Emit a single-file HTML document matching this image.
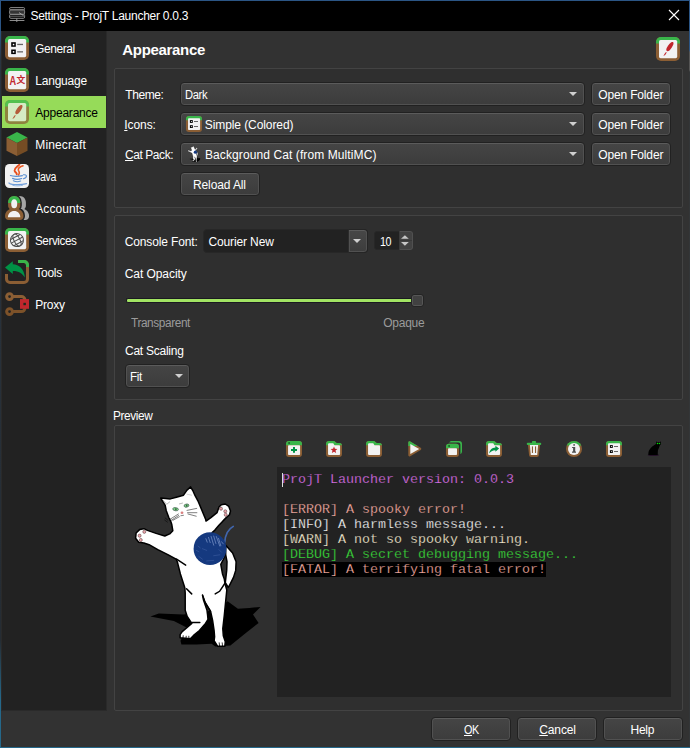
<!DOCTYPE html>
<html><head><meta charset="utf-8"><title>Settings - ProjT Launcher 0.0.3</title>
<style>
*{margin:0;padding:0;box-sizing:border-box}
html,body{width:690px;height:748px;overflow:hidden;background:#323232}
body{position:relative;font-family:"Liberation Sans",sans-serif;font-size:12px;color:#fff}
.abs{position:absolute}
.tx{position:absolute;white-space:nowrap;z-index:5}
.fr{position:absolute;z-index:50}
#title{position:absolute;left:1px;top:1px;width:688px;height:30px;background:#000}
#side{position:absolute;left:1px;top:31px;width:106px;height:680px;background:#222;border:1px solid #2a2a2a;border-top:none}
#sel{position:absolute;left:2px;top:96px;width:104px;height:32px;background:#96db59}
.gb{position:absolute;background:#2f2f2f;border:1px solid #434343;border-radius:2px}
.combo,.btn{position:absolute;height:24px;border:1px solid #212121;border-radius:4px;background:linear-gradient(#454545,#3c3c3c);box-shadow:inset 0 1px 0 0 #5b5b5b,inset 0 0 0 1px #515151}
.arr{position:absolute;width:0;height:0;border-left:4px solid transparent;border-right:4px solid transparent;border-top:4px solid #cfcfcf}
u{text-decoration:underline;text-underline-offset:1px}
.con{-webkit-text-stroke:0.25px #222;position:absolute;left:282px;font-family:"Liberation Mono",monospace;font-size:13.333px;line-height:15px;height:15px;white-space:pre;z-index:5}
</style></head><body>
<div id="title"></div>
<svg class="abs" style="left:0px;top:0px;" width="32" height="30" viewBox="0 0 32 30"><g fill="none" stroke="#9c9c9c" stroke-width="0.9"><rect x="9.6" y="7.6" width="15" height="2.3" rx="1.1"/><rect x="9.6" y="9.9" width="15" height="4.3" rx="1.2"/><rect x="9.6" y="14.2" width="15" height="4.1" rx="1.2"/><path d="M9.6 12H24.6M9.6 16.2H24.6" stroke="#777"/><path d="M19 12.6L23.5 15.6" stroke="#aaa"/><path d="M16.8 18.4V22M9.6 20.5H24.4"/></g></svg>

<div class="tx" style="left:30.40px;top:8px;letter-spacing:-0.261px;color:#fff;font-size:12px;line-height:16px;">Settings - ProjT Launcher 0.0.3</div>
<svg class="abs" style="left:668px;top:9px" width="12" height="12" viewBox="0 0 12 12"><path d="M1 1L11 11M11 1L1 11" stroke="#fff" stroke-width="1.1" fill="none"/></svg>
<div id="side"></div>
<div id="sel"></div>
<svg class="abs" style="left:5px;top:36px;" width="24" height="24" viewBox="0 0 24 24"><defs><clipPath id="ct1"><rect x="0" y="0" width="24" height="6.6"/></clipPath></defs><rect x="0" y="0" width="24" height="24" rx="5" fill="#8b5e34"/><rect x="0" y="0" width="24" height="24" rx="5" fill="#39b54a" clip-path="url(#ct1)"/><rect x="3" y="3" width="18.2" height="18.2" rx="1.6" fill="#f2f2f2"/><rect x="6.2" y="6.2" width="4.6" height="4.6" fill="#000"/><rect x="7.8" y="7.8" width="1.5" height="1.5" fill="#fff"/><rect x="6.2" y="13.5" width="4.6" height="4.6" fill="#000"/><rect x="7.8" y="15.1" width="1.5" height="1.5" fill="#fff"/><rect x="12.2" y="7.8" width="5.8" height="1.3" fill="#666"/><rect x="12.2" y="15.2" width="5.8" height="1.3" fill="#666"/></svg>
<svg class="abs" style="left:5px;top:68px;" width="24" height="24" viewBox="0 0 24 24"><defs><clipPath id="ct2"><rect x="0" y="0" width="24" height="6.6"/></clipPath></defs><rect x="0" y="0" width="24" height="24" rx="5" fill="#8b5e34"/><rect x="0" y="0" width="24" height="24" rx="5" fill="#39b54a" clip-path="url(#ct2)"/><rect x="3" y="3" width="18.2" height="18.2" rx="1.6" fill="#f2f2f2"/><text x="4.4" y="16.6" font-family="Liberation Sans, sans-serif" font-weight="bold" font-size="13.2" fill="#c1272d" textLength="6.6" lengthAdjust="spacingAndGlyphs">A</text><text x="11.5" y="15.4" font-family="Noto Sans CJK SC, Noto Sans CJK JP, sans-serif" font-weight="bold" font-size="8.8" fill="#c1272d">文</text></svg>
<svg class="abs" style="left:5px;top:100px;opacity:.7;" width="24" height="24" viewBox="0 0 24 24"><defs><clipPath id="ct3"><rect x="0" y="0" width="24" height="6.6"/></clipPath></defs><rect x="0" y="0" width="24" height="24" rx="5" fill="#8b5e34"/><rect x="0" y="0" width="24" height="24" rx="5" fill="#39b54a" clip-path="url(#ct3)"/><rect x="3" y="3" width="18.2" height="18.2" rx="1.6" fill="#f2f2f2"/><ellipse cx="0" cy="0" rx="5.4" ry="2.1" transform="translate(13.9 9.6) rotate(-56)" fill="#c1272d"/><path d="M10.9 15.2 L9.4 15.4 Q8 17.6 7.4 18.9 Q9.6 18.2 10.9 15.2Z" fill="#c1272d"/></svg>
<svg class="abs" style="left:5px;top:132px;" width="24" height="24" viewBox="0 0 24 24"><path d="M12 0L22.5 5.5L12 11L1.5 5.5Z" fill="#39b54a"/><path d="M1.5 5.5L12 11V24L1.5 18.8Z" fill="#8b5e34"/><path d="M12 11L22.5 5.5V18.8L12 24Z" fill="#754c24"/></svg>
<svg class="abs" style="left:5px;top:164px;" width="24" height="24" viewBox="0 0 24 24"><rect x="0" y="0" width="24" height="24" rx="4.5" fill="#f2f2f2"/><g fill="none" stroke-linecap="round"><path d="M14.4 0.6C12 3 8.6 4.6 9.8 7.2C10.6 8.6 12 9 11.8 10.4" stroke="#e8501e" stroke-width="1.9"/><path d="M18 1.8C15.6 2.6 12.8 4.2 13.4 6.2C14 7.8 15.4 8.6 13.6 11" stroke="#ea5a24" stroke-width="1.6"/><path d="M5.4 11.6C8 12.6 14 12.6 17.4 11.6" stroke="#5b8fd1" stroke-width="1.1"/><path d="M18.4 10.8C22.4 10 22.6 13.6 18.4 14.8" stroke="#5b8fd1" stroke-width="1.1"/><path d="M7.6 14.4C10 15.4 14 15.4 16.6 14.5" stroke="#5b8fd1" stroke-width="1.2"/><path d="M8.4 16.8C10.4 17.8 13.8 17.8 15.6 17" stroke="#5b8fd1" stroke-width="1.2"/><path d="M4 18.8C3 20.4 14 21.6 21.6 19.6" stroke="#6f9dd8" stroke-width="1.1"/><path d="M7.8 21.4C11 22.2 15 22 17.6 21.2" stroke="#8db3e2" stroke-width="1"/></g></svg>
<svg class="abs" style="left:5px;top:196px;" width="24" height="24" viewBox="0 0 24 24"><defs><clipPath id="ca"><rect x="0" y="0" width="24" height="7.1"/></clipPath></defs><path d="M9.2 0C5.8 0 3.1 2.8 3.1 6.4V9.4C3.1 11 3.8 12.2 4.8 13C2 14.2 0 16.8 0 20C0 22.4 1.6 24 3.6 24H14.9C16.9 24 18.5 22.4 18.5 20C18.5 16.8 16.5 14.2 13.7 13C14.7 12.2 15.3 11 15.3 9.4V6.4C15.3 2.8 12.6 0 9.2 0Z" transform="translate(5.6 0)" fill="#a6a6a6"/><path d="M9.2 0C5.8 0 3.1 2.8 3.1 6.4V9.4C3.1 11 3.8 12.2 4.8 13C2 14.2 0 16.8 0 20C0 22.4 1.6 24 3.6 24H14.9C16.9 24 18.5 22.4 18.5 20C18.5 16.8 16.5 14.2 13.7 13C14.7 12.2 15.3 11 15.3 9.4V6.4C15.3 2.8 12.6 0 9.2 0Z" fill="#8b5e34" stroke="#222" stroke-width="3"/><path d="M9.2 0C5.8 0 3.1 2.8 3.1 6.4V9.4C3.1 11 3.8 12.2 4.8 13C2 14.2 0 16.8 0 20C0 22.4 1.6 24 3.6 24H14.9C16.9 24 18.5 22.4 18.5 20C18.5 16.8 16.5 14.2 13.7 13C14.7 12.2 15.3 11 15.3 9.4V6.4C15.3 2.8 12.6 0 9.2 0Z" fill="#8b5e34"/><path d="M9.2 0C5.8 0 3.1 2.8 3.1 6.4V9.4C3.1 11 3.8 12.2 4.8 13C2 14.2 0 16.8 0 20C0 22.4 1.6 24 3.6 24H14.9C16.9 24 18.5 22.4 18.5 20C18.5 16.8 16.5 14.2 13.7 13C14.7 12.2 15.3 11 15.3 9.4V6.4C15.3 2.8 12.6 0 9.2 0Z" fill="#39b54a" clip-path="url(#ca)"/><ellipse cx="9.2" cy="7.7" rx="3" ry="4.5" fill="#f2f2f2"/><path d="M2.9 21.2C2.9 17.6 5.6 15 9.2 15C12.8 15 15.3 17.6 15.3 21.2Z" fill="#f2f2f2"/></svg>
<svg class="abs" style="left:5px;top:228px;" width="24" height="24" viewBox="0 0 24 24"><defs><clipPath id="ct4"><rect x="0" y="0" width="24" height="6.6"/></clipPath></defs><rect x="0" y="0" width="24" height="24" rx="5" fill="#8b5e34"/><rect x="0" y="0" width="24" height="24" rx="5" fill="#39b54a" clip-path="url(#ct4)"/><rect x="3" y="3" width="18.2" height="18.2" rx="1.6" fill="#f2f2f2"/><g fill="none" stroke="#4d4d4d" stroke-width="1" transform="rotate(-28 12 12.1)"><circle cx="12" cy="12.1" r="6.5"/><ellipse cx="12" cy="12.1" rx="2.9" ry="6.5"/><path d="M5.5 12.1H18.5M6.6 8.6H17.4M6.6 15.6H17.4"/></g></svg>
<svg class="abs" style="left:5px;top:260px;" width="24" height="24" viewBox="0 0 24 24"><defs><clipPath id="cq"><rect x="0" y="0" width="24" height="7.1"/></clipPath></defs><path d="M13.1 1.5H19A3.5 3.5 0 0 1 22.5 5V19A3.5 3.5 0 0 1 19 22.5H5A3.5 3.5 0 0 1 1.5 19V14" fill="none" stroke="#8b5e34" stroke-width="3"/><path d="M13.1 1.5H19A3.5 3.5 0 0 1 22.5 5V19" fill="none" stroke="#39b54a" stroke-width="3" clip-path="url(#cq)"/><path d="M0 7.6L7.8 1.2V4.3C14 4.3 19.4 9.4 19.9 17.6C17.6 13.4 13.6 10.8 7.8 10.9V13.9Z" fill="#009245"/></svg>
<svg class="abs" style="left:5px;top:292px;" width="24" height="24" viewBox="0 0 24 24"><g fill="none" stroke-width="3"><path d="M7.4 4.55H16.4A3.5 3.5 0 0 1 19.9 8.05V12" stroke="#8b5e34"/><path d="M7.4 19.6H16.4A3.5 3.5 0 0 0 19.9 16.1V12" stroke="#7d5229"/><circle cx="4.55" cy="4.55" r="2.9" stroke="#8b5e34"/><circle cx="4.55" cy="19.6" r="2.9" stroke="#7d5229"/></g><rect x="15" y="7.1" width="9.2" height="9.7" fill="#c1272d"/><rect x="18.4" y="10.8" width="2.5" height="2.4" fill="#1e2a1e"/></svg>
<svg class="abs" style="left:656px;top:37px;" width="24" height="24" viewBox="0 0 24 24"><defs><clipPath id="ct5"><rect x="0" y="0" width="24" height="6.6"/></clipPath></defs><rect x="0" y="0" width="24" height="24" rx="5" fill="#8b5e34"/><rect x="0" y="0" width="24" height="24" rx="5" fill="#39b54a" clip-path="url(#ct5)"/><rect x="3" y="3" width="18.2" height="18.2" rx="1.6" fill="#f2f2f2"/><ellipse cx="0" cy="0" rx="5.4" ry="2.1" transform="translate(13.9 9.6) rotate(-56)" fill="#c1272d"/><path d="M10.9 15.2 L9.4 15.4 Q8 17.6 7.4 18.9 Q9.6 18.2 10.9 15.2Z" fill="#c1272d"/></svg>

<div class="tx" style="left:35.30px;top:41px;letter-spacing:-0.400px;color:#fff;font-size:12px;line-height:16px;transform:scaleX(0.9994);transform-origin:0 0;">General</div>
<div class="tx" style="left:35.30px;top:73px;letter-spacing:-0.217px;color:#fff;font-size:12px;line-height:16px;">Language</div>
<div class="tx" style="left:35.30px;top:105px;letter-spacing:-0.227px;color:#000;font-size:12px;line-height:16px;">Appearance</div>
<div class="tx" style="left:35.30px;top:137px;letter-spacing:0.136px;color:#fff;font-size:12px;line-height:16px;">Minecraft</div>
<div class="tx" style="left:35.30px;top:169px;letter-spacing:-0.400px;color:#fff;font-size:12px;line-height:16px;transform:scaleX(0.8826);transform-origin:0 0;">Java</div>
<div class="tx" style="left:35.30px;top:201px;letter-spacing:0.063px;color:#fff;font-size:12px;line-height:16px;">Accounts</div>
<div class="tx" style="left:35.30px;top:233px;letter-spacing:-0.400px;color:#fff;font-size:12px;line-height:16px;transform:scaleX(0.9696);transform-origin:0 0;">Services</div>
<div class="tx" style="left:35.30px;top:265px;letter-spacing:-0.278px;color:#fff;font-size:12px;line-height:16px;">Tools</div>
<div class="tx" style="left:35.30px;top:297px;letter-spacing:-0.268px;color:#fff;font-size:12px;line-height:16px;">Proxy</div>

<div class="gb" style="left:114px;top:68px;width:569px;height:140px"></div>
<div class="combo" style="left:180px;top:82px;width:405px"></div>
<div class="combo" style="left:180px;top:112px;width:405px"></div>
<div class="combo" style="left:180px;top:142px;width:405px"></div>
<div class="arr" style="left:569px;top:92px"></div>
<div class="arr" style="left:569px;top:122px"></div>
<div class="arr" style="left:569px;top:152px"></div>
<div class="btn" style="left:591px;top:82px;width:80px"></div>
<div class="btn" style="left:591px;top:112px;width:80px"></div>
<div class="btn" style="left:591px;top:142px;width:80px"></div>
<div class="btn" style="left:180px;top:172px;width:80px"></div>

<div class="tx" style="left:122.30px;top:40px;letter-spacing:-0.314px;color:#fff;font-size:15px;line-height:20px;font-weight:bold;">Appearance</div>
<div class="tx" style="left:125.20px;top:87px;letter-spacing:-0.390px;color:#fff;font-size:12px;line-height:16px;">Theme:</div>
<div class="tx" style="left:124.20px;top:117px;letter-spacing:-0.056px;color:#fff;font-size:12px;line-height:16px;"><u>I</u>cons:</div>
<div class="tx" style="left:124.80px;top:147px;letter-spacing:-0.400px;color:#fff;font-size:12px;line-height:16px;transform:scaleX(0.9941);transform-origin:0 0;"><u>C</u>at Pack:</div>
<div class="tx" style="left:185.20px;top:87px;letter-spacing:-0.400px;color:#fff;font-size:12px;line-height:16px;transform:scaleX(0.9309);transform-origin:0 0;">Dark</div>
<div class="tx" style="left:204.80px;top:117px;letter-spacing:-0.089px;color:#fff;font-size:12px;line-height:16px;">Simple (Colored)</div>
<div class="tx" style="left:205.00px;top:147px;letter-spacing:0.096px;color:#fff;font-size:12px;line-height:16px;">Background Cat (from MultiMC)</div>
<div class="tx" style="left:598.30px;top:87px;letter-spacing:-0.161px;color:#fff;font-size:12px;line-height:16px;">Open Folder</div>
<div class="tx" style="left:598.30px;top:117px;letter-spacing:-0.161px;color:#fff;font-size:12px;line-height:16px;">Open Folder</div>
<div class="tx" style="left:598.30px;top:147px;letter-spacing:-0.161px;color:#fff;font-size:12px;line-height:16px;">Open Folder</div>
<div class="tx" style="left:193.00px;top:177px;letter-spacing:-0.115px;color:#fff;font-size:12px;line-height:16px;">Reload All</div>

<div class="gb" style="left:114px;top:215px;width:569px;height:185px"></div>
<!-- font combo -->
<div class="abs" style="left:203px;top:229px;width:165px;height:24px;border-radius:4px;background:#222;border:1px solid #272727"></div>
<div class="abs" style="left:348px;top:229px;width:20px;height:24px;border-radius:0 4px 4px 0;background:linear-gradient(#474747,#3d3d3d);border:1px solid #252525;border-left-color:#2c2c2c;box-shadow:inset 0 1px 0 0 #5b5b5b,inset 0 0 0 1px #515151"></div>
<div class="arr" style="left:353px;top:239px"></div>
<!-- spinbox -->
<div class="abs" style="left:374px;top:231px;width:39px;height:19px;border-radius:3px;background:#222;border:1px solid #272727"></div>
<div class="abs" style="left:399px;top:231px;width:14px;height:19px;border-radius:0 3px 3px 0;background:#424242;border:1px solid #505050;border-left-color:#3a3a3a"></div>
<div class="abs" style="left:400px;top:240px;width:12px;height:1px;background:#383838"></div>
<svg class="abs" style="left:399px;top:231px" width="14" height="19" viewBox="0 0 14 19"><path d="M2 7.8L5.9 4.2L9.8 7.8Z M2 11L5.9 14.8L9.8 11Z" fill="#c6c6c6"/></svg>
<!-- slider -->
<div class="abs" style="left:126px;top:298px;width:291px;height:5px;background:#a2e463;border:1px solid #1a1a20;border-width:1px 0 1px 1px;border-radius:2px 0 0 2px"></div>
<div class="abs" style="left:411px;top:294px;width:13px;height:13px;border-radius:3px;background:#414141;border:1px solid #242424;box-shadow:inset 0 0 0 1px #565656"></div>
<!-- fit combo -->
<div class="combo" style="left:125px;top:364px;width:65px"></div>
<div class="arr" style="left:175px;top:374px"></div>

<div class="tx" style="left:124.70px;top:234px;letter-spacing:-0.123px;color:#fff;font-size:12px;line-height:16px;">Console Font:</div>
<div class="tx" style="left:208.40px;top:234px;letter-spacing:-0.122px;color:#fff;font-size:12px;line-height:16px;">Courier New</div>
<div class="tx" style="left:379.70px;top:234px;letter-spacing:-0.400px;color:#fff;font-size:12px;line-height:16px;transform:scaleX(0.8965);transform-origin:0 0;">10</div>
<div class="tx" style="left:124.70px;top:266px;letter-spacing:-0.059px;color:#fff;font-size:12px;line-height:16px;">Cat Opacity</div>
<div class="tx" style="left:131.00px;top:315px;letter-spacing:-0.400px;color:#9b9b9b;font-size:12px;line-height:16px;transform:scaleX(0.9849);transform-origin:0 0;">Transparent</div>
<div class="tx" style="left:383.20px;top:315px;letter-spacing:-0.246px;color:#9b9b9b;font-size:12px;line-height:16px;">Opaque</div>
<div class="tx" style="left:125.00px;top:343px;letter-spacing:-0.249px;color:#fff;font-size:12px;line-height:16px;">Cat Scaling</div>
<div class="tx" style="left:130.00px;top:369px;letter-spacing:-0.400px;color:#fff;font-size:12px;line-height:16px;transform:scaleX(0.9700);transform-origin:0 0;">Fit</div>

<div class="tx" style="left:113.30px;top:408px;letter-spacing:-0.400px;color:#fff;font-size:12px;line-height:16px;transform:scaleX(0.9874);transform-origin:0 0;">Preview</div>
<div class="gb" style="left:114px;top:425px;width:569px;height:286px"></div>
<svg class="abs" style="left:286px;top:441px;" width="16" height="16" viewBox="0 0 16 16"><defs><clipPath id="t1"><rect x="-1" y="-1" width="20" height="5.2"/></clipPath></defs><rect width="16" height="16" rx="3" fill="#8b5e34"/><rect width="16" height="16" rx="3" fill="#39b54a" clip-path="url(#t1)"/><rect x="2.05" y="4.2" width="12.05" height="9.9" rx="0.8" fill="#f2f2f2"/><rect x="2.3" y="1.2" width="1.6" height="1.6" fill="#1d4d24"/><path d="M7 6.1H9V7.9H11V9.9H9V11.8H7V9.9H5V7.9H7Z" fill="#009245"/></svg>
<svg class="abs" style="left:326px;top:441px;" width="16" height="16" viewBox="0 0 16 16"><defs><clipPath id="t2"><rect x="-1" y="-1" width="20" height="5.2"/></clipPath></defs><path d="M0 3A3 3 0 0 1 3 0H7.6C8.6 0 9 0.6 9.6 1.3C10 1.8 10.4 2 11 2H13.5A2.5 2.5 0 0 1 16 4.5V13A3 3 0 0 1 13 16H3A3 3 0 0 1 0 13Z" fill="#8b5e34"/><path d="M0 3A3 3 0 0 1 3 0H7.6C8.6 0 9 0.6 9.6 1.3C10 1.8 10.4 2 11 2H13.5A2.5 2.5 0 0 1 16 4.5V13A3 3 0 0 1 13 16H3A3 3 0 0 1 0 13Z" fill="#39b54a" clip-path="url(#t2)"/><path d="M2.05 3.2A1 1 0 0 1 3.05 2.2H6.6C7.4 2.2 7.6 2.8 8 3.4C8.4 4 8.8 4.2 9.6 4.2H13.1A1 1 0 0 1 14.1 5.2V13.1A1 1 0 0 1 13.1 14.1H3.05A1 1 0 0 1 2.05 13.1Z" fill="#f2f2f2"/><polygon points="8.00,5.50 8.94,7.81 11.42,7.99 9.52,9.59 10.12,12.01 8.00,10.70 5.88,12.01 6.48,9.59 4.58,7.99 7.06,7.81" fill="#c1272d"/></svg>
<svg class="abs" style="left:366px;top:441px;" width="16" height="16" viewBox="0 0 16 16"><defs><clipPath id="t3"><rect x="-1" y="-1" width="20" height="5.2"/></clipPath></defs><path d="M0 3A3 3 0 0 1 3 0H7.6C8.6 0 9 0.6 9.6 1.3C10 1.8 10.4 2 11 2H13.5A2.5 2.5 0 0 1 16 4.5V13A3 3 0 0 1 13 16H3A3 3 0 0 1 0 13Z" fill="#8b5e34"/><path d="M0 3A3 3 0 0 1 3 0H7.6C8.6 0 9 0.6 9.6 1.3C10 1.8 10.4 2 11 2H13.5A2.5 2.5 0 0 1 16 4.5V13A3 3 0 0 1 13 16H3A3 3 0 0 1 0 13Z" fill="#39b54a" clip-path="url(#t3)"/><path d="M2.05 3.2A1 1 0 0 1 3.05 2.2H6.6C7.4 2.2 7.6 2.8 8 3.4C8.4 4 8.8 4.2 9.6 4.2H13.1A1 1 0 0 1 14.1 5.2V13.1A1 1 0 0 1 13.1 14.1H3.05A1 1 0 0 1 2.05 13.1Z" fill="#f2f2f2"/></svg>
<svg class="abs" style="left:406px;top:441px;" width="16" height="16" viewBox="0 0 16 16"><defs><clipPath id="t4"><rect x="-1" y="-1" width="20" height="6.1"/></clipPath></defs><path d="M3.6 1.6L14 7.9L3.6 14.2Z" fill="#8b5e34" stroke="#8b5e34" stroke-width="2.6" stroke-linejoin="round"/><path d="M3.6 1.6L14 7.9L3.6 14.2Z" fill="#39b54a" stroke="#39b54a" stroke-width="2.6" stroke-linejoin="round" clip-path="url(#t4)"/><path d="M4.3 3L13.2 7.9L4.3 12.9Z" fill="#f2f2f2"/></svg>
<svg class="abs" style="left:446px;top:441px;" width="16" height="16" viewBox="0 0 16 16"><defs><clipPath id="t5"><rect x="-1" y="-1" width="20" height="8.3"/></clipPath></defs><path d="M3.2 1.6C3.6 0.6 4.6 0 5.8 0H13A3 3 0 0 1 16 3V10.4C16 11.6 15.4 12.5 14.4 13V3.6A2 2 0 0 0 12.4 1.6Z" fill="#39b54a"/><rect x="0" y="2.8" width="13" height="13.2" rx="3" fill="#8b5e34"/><rect x="0" y="2.8" width="13" height="13.2" rx="3" fill="#39b54a" clip-path="url(#t5)"/><rect x="2.05" y="7.3" width="8.95" height="6.7" rx="0.8" fill="#f2f2f2"/><rect x="2.3" y="4.2" width="1.6" height="1.6" fill="#1d4d24"/></svg>
<svg class="abs" style="left:486px;top:441px;" width="16" height="16" viewBox="0 0 16 16"><defs><clipPath id="t6"><rect x="-1" y="-1" width="20" height="5.2"/></clipPath></defs><path d="M0 3A3 3 0 0 1 3 0H7.6C8.6 0 9 0.6 9.6 1.3C10 1.8 10.4 2 11 2H13.5A2.5 2.5 0 0 1 16 4.5V13A3 3 0 0 1 13 16H3A3 3 0 0 1 0 13Z" fill="#8b5e34"/><path d="M0 3A3 3 0 0 1 3 0H7.6C8.6 0 9 0.6 9.6 1.3C10 1.8 10.4 2 11 2H13.5A2.5 2.5 0 0 1 16 4.5V13A3 3 0 0 1 13 16H3A3 3 0 0 1 0 13Z" fill="#39b54a" clip-path="url(#t6)"/><path d="M2.05 3.2A1 1 0 0 1 3.05 2.2H6.6C7.4 2.2 7.6 2.8 8 3.4C8.4 4 8.8 4.2 9.6 4.2H13.1A1 1 0 0 1 14.1 5.2V13.1A1 1 0 0 1 13.1 14.1H3.05A1 1 0 0 1 2.05 13.1Z" fill="#f2f2f2"/><path d="M13.1 7.5L9.4 4.7V6.4C6 6.5 3.4 9 3.2 12.6C4.6 10.4 6.4 9.3 9.4 9.2V10.8Z" fill="#009245"/></svg>
<svg class="abs" style="left:526px;top:441px;" width="16" height="16" viewBox="0 0 16 16"><path d="M1.9 3.6H14.1L12.9 14.2A2 2 0 0 1 11 16H5A2 2 0 0 1 3.1 14.2Z" fill="#8b5e34"/><path d="M3.9 3.9H12.1L11.2 14.1H4.8Z" fill="#f2f2f2"/><rect x="5.9" y="5.2" width="1.1" height="6.8" rx="0.5" fill="#8b5e34"/><rect x="9" y="5.2" width="1.1" height="6.8" rx="0.5" fill="#8b5e34"/><rect x="0.75" y="1.8" width="14.5" height="2.1" rx="1" fill="#39b54a"/><rect x="6" y="0" width="4" height="2.4" rx="0.6" fill="#39b54a"/></svg>
<svg class="abs" style="left:566px;top:441px;" width="16" height="16" viewBox="0 0 16 16"><defs><clipPath id="t8"><rect x="-1" y="-1" width="20" height="5.4"/></clipPath></defs><circle cx="8" cy="8" r="8" fill="#8b5e34"/><circle cx="8" cy="8" r="8" fill="#39b54a" clip-path="url(#t8)"/><circle cx="8" cy="8" r="6" fill="#f2f2f2"/><circle cx="8.1" cy="3.9" r="0.9" fill="#4d4d4d"/><path d="M6.1 5.9H9.2V10.5H10V11.8H6V10.5H7.1V7.1H6.1Z" fill="#4d4d4d"/></svg>
<svg class="abs" style="left:606px;top:441px;" width="16" height="16" viewBox="0 0 16 16"><defs><clipPath id="t9"><rect x="-1" y="-1" width="20" height="5.2"/></clipPath></defs><rect width="16" height="16" rx="3" fill="#8b5e34"/><rect width="16" height="16" rx="3" fill="#39b54a" clip-path="url(#t9)"/><rect x="2.05" y="2.2" width="12.05" height="11.9" rx="0.8" fill="#f2f2f2"/><rect x="3.9" y="4.1" width="2.9" height="2.8" fill="#000"/><rect x="4.95" y="5.1" width="0.9" height="0.9" fill="#fff"/><rect x="3.9" y="9.2" width="2.9" height="2.8" fill="#000"/><rect x="4.95" y="10.2" width="0.9" height="0.9" fill="#fff"/><rect x="8" y="5" width="4" height="1" fill="#666"/><rect x="8" y="10" width="4" height="1" fill="#666"/></svg>
<svg class="abs" style="left:646px;top:441px;" width="16" height="16" viewBox="0 0 16 16"><ellipse cx="7.4" cy="14.1" rx="5.6" ry="1" fill="#241028"/><path d="M10.3 0.2L11.3 1.2H13.7L14.7 0.2L15 2.6C15 3.6 14.4 4.2 13.8 4.5C13.4 6.4 12.2 8 11.9 9.6C11.7 11 11.9 12.6 11.7 14H2.4C2.2 12 2.6 10.4 3.3 9C4.6 6.6 7.6 4.4 10 3Z" fill="#000"/><circle cx="11.5" cy="2.5" r="0.75" fill="#00e400"/><circle cx="13.5" cy="2.5" r="0.75" fill="#00e400"/></svg>
<svg class="abs" style="left:186px;top:116px;" width="16" height="16" viewBox="0 0 16 16"><defs><clipPath id="c9"><rect x="-1" y="-1" width="20" height="5.2"/></clipPath></defs><rect width="16" height="16" rx="3" fill="#8b5e34"/><rect width="16" height="16" rx="3" fill="#39b54a" clip-path="url(#c9)"/><rect x="2.05" y="2.2" width="12.05" height="11.9" rx="0.8" fill="#f2f2f2"/><rect x="3.9" y="4.1" width="2.9" height="2.8" fill="#000"/><rect x="4.95" y="5.1" width="0.9" height="0.9" fill="#fff"/><rect x="3.9" y="9.2" width="2.9" height="2.8" fill="#000"/><rect x="4.95" y="10.2" width="0.9" height="0.9" fill="#fff"/><rect x="8" y="5" width="4" height="1" fill="#666"/><rect x="8" y="10" width="4" height="1" fill="#666"/></svg>
<svg class="abs" style="left:186px;top:146px" width="16" height="16" viewBox="0 0 16 16"><g transform="translate(1.9 0) scale(0.1) translate(-135 -487)"><path d="M150.4 616.4 L158.8 613.5 L183.3 614.5 L202.1 612.6 L219.1 608.8 L227.6 601.3 L237.9 608.8 L249.2 607.9 L260.5 606.9 L253.0 614.5 L258.6 623.0 L245.5 633.3 L230.4 645.6 L215.3 646.5 L211.6 643.7 L196.5 644.6 L181.4 644.6 L180.5 640.8 L187.1 627.7 L173.9 621.1Z" fill="#000"/><path d="M225.7 545.2 L232.6 553.0 L236.1 561.7 L235.7 570.4 L233.5 577.4 L230.0 584.3 L228.3 587.5 L225.3 582.6 L226.7 570.4 L227.0 561.7 L225.7 554.8Z" fill="#fff" stroke="#111" stroke-width="3"/><path d="M190.6 486.9 L193.1 491.2 L195.1 495.7 L197.9 500.8 L200.7 507.4 L203.0 513.0 L205.6 519.1 L206.0 521.1 L210.9 517.7 L217.0 512.7 L219.0 507.0 L221.3 504.7 L225.3 504.0 L228.8 506.4 L230.5 511.0 L229.5 514.8 L226.5 517.4 L223.0 520.9 L218.7 525.6 L214.9 530.1 L212.1 532.5 L218.7 537.4 L223.9 546.1 L224.8 556.5 L220.8 564.3 L222.5 573.9 L224.3 579.1 L225.0 583.5 L226.8 590.0 L225.8 600.1 L224.3 615.4 L222.8 628.6 L223.3 635.7 L225.3 641.7 L224.8 646.3 L217.7 646.3 L214.1 640.7 L214.6 636.7 L214.1 630.6 L212.6 620.4 L210.6 611.3 L205.0 602.2 L202.5 595.1 L203.5 600.1 L207.0 610.3 L207.5 614.3 L208.0 619.4 L205.5 623.5 L199.4 630.6 L193.3 635.7 L190.3 638.7 L180.1 637.7 L180.1 634.6 L182.2 631.6 L191.8 623.5 L187.2 616.4 L185.2 610.3 L185.2 593.0 L184.8 587.8 L180.4 573.9 L177.3 561.7 L176.1 559.1 L168.3 554.8 L157.8 549.6 L149.1 544.7 L143.9 543.0 L138.7 542.3 L135.6 538.3 L136.1 533.0 L139.6 529.6 L143.9 528.7 L147.4 530.4 L156.1 533.4 L164.8 536.0 L169.7 533.9 L172.8 530.7 L171.8 524.6 L170.8 521.6 L168.8 517.5 L166.2 510.4 L165.2 505.4 L160.7 498.1 L165.7 498.5 L170.3 498.9 L176.4 497.2 L183.5 495.2 L187.0 490.1Z" fill="#fff" stroke="#111" stroke-width="3" stroke-linejoin="round"/><circle cx="210.0" cy="548.7" r="16.4" fill="#15397f"/></g></svg>

<svg class="abs" style="left:0;top:0" width="690" height="748" viewBox="0 0 690 748"><path d="M150.4 616.4 L158.8 613.5 L183.3 614.5 L202.1 612.6 L219.1 608.8 L227.6 601.3 L237.9 608.8 L249.2 607.9 L260.5 606.9 L253.0 614.5 L258.6 623.0 L245.5 633.3 L230.4 645.6 L215.3 646.5 L211.6 643.7 L196.5 644.6 L181.4 644.6 L180.5 640.8 L187.1 627.7 L173.9 621.1Z" fill="#000"/><path d="M225.7 545.2 L232.6 553.0 L236.1 561.7 L235.7 570.4 L233.5 577.4 L230.0 584.3 L228.3 587.5 L225.3 582.6 L226.7 570.4 L227.0 561.7 L225.7 554.8Z" fill="#fff" stroke="#000" stroke-width="1.5" stroke-linejoin="round"/><path d="M190.6 486.9 L193.1 491.2 L195.1 495.7 L197.9 500.8 L200.7 507.4 L203.0 513.0 L205.6 519.1 L206.0 521.1 L210.9 517.7 L217.0 512.7 L219.0 507.0 L221.3 504.7 L225.3 504.0 L228.8 506.4 L230.5 511.0 L229.5 514.8 L226.5 517.4 L223.0 520.9 L218.7 525.6 L214.9 530.1 L212.1 532.5 L218.7 537.4 L223.9 546.1 L224.8 556.5 L220.8 564.3 L222.5 573.9 L224.3 579.1 L225.0 583.5 L226.8 590.0 L225.8 600.1 L224.3 615.4 L222.8 628.6 L223.3 635.7 L225.3 641.7 L224.8 646.3 L217.7 646.3 L214.1 640.7 L214.6 636.7 L214.1 630.6 L212.6 620.4 L210.6 611.3 L205.0 602.2 L202.5 595.1 L203.5 600.1 L207.0 610.3 L207.5 614.3 L208.0 619.4 L205.5 623.5 L199.4 630.6 L193.3 635.7 L190.3 638.7 L180.1 637.7 L180.1 634.6 L182.2 631.6 L191.8 623.5 L187.2 616.4 L185.2 610.3 L185.2 593.0 L184.8 587.8 L180.4 573.9 L177.3 561.7 L176.1 559.1 L168.3 554.8 L157.8 549.6 L149.1 544.7 L143.9 543.0 L138.7 542.3 L135.6 538.3 L136.1 533.0 L139.6 529.6 L143.9 528.7 L147.4 530.4 L156.1 533.4 L164.8 536.0 L169.7 533.9 L172.8 530.7 L171.8 524.6 L170.8 521.6 L168.8 517.5 L166.2 510.4 L165.2 505.4 L160.7 498.1 L165.7 498.5 L170.3 498.9 L176.4 497.2 L183.5 495.2 L187.0 490.1Z" fill="#fff" stroke="#000" stroke-width="1.5" stroke-linejoin="round"/><path d="M176.6 559.1 L185.7 565.2" fill="none" stroke="#000" stroke-width="1.4" stroke-linecap="round"/><path d="M186.5 588.7 L191.7 593.9" fill="none" stroke="#000" stroke-width="1.5" stroke-linecap="round"/><path d="M224.8 583.5 L219.6 591.3 L215.2 593.9" fill="none" stroke="#000" stroke-width="1.5" stroke-linecap="round"/><path d="M191.8 622.5 L199.9 622.5" fill="none" stroke="#000" stroke-width="1.3" stroke-linecap="round"/><path d="M202.5 595.1 L205.0 602.2 L210.6 611.3" fill="none" stroke="#000" stroke-width="1.2" stroke-linecap="round"/><path d="M187.0 510.4 L196.7 508.4" fill="none" stroke="#000" stroke-width="0.5" stroke-linecap="round"/><path d="M187.5 512.7 L196.9 512.7" fill="none" stroke="#000" stroke-width="0.5" stroke-linecap="round"/><path d="M188.0 514.0 L196.2 516.2" fill="none" stroke="#000" stroke-width="0.5" stroke-linecap="round"/><path d="M178.4 514.0 L170.3 519.1" fill="none" stroke="#000" stroke-width="0.5" stroke-linecap="round"/><path d="M178.6 515.5 L170.8 520.6" fill="none" stroke="#000" stroke-width="0.5" stroke-linecap="round"/><path d="M179.4 516.7 L172.8 520.4" fill="none" stroke="#000" stroke-width="0.5" stroke-linecap="round"/><path d="M165.2 518.0 L167.8 520.1" fill="none" stroke="#000" stroke-width="0.5" stroke-linecap="round"/><path d="M164.7 520.1 L167.4 522.1" fill="none" stroke="#000" stroke-width="0.5" stroke-linecap="round"/><path d="M179.4 503.9 L182.5 503.1" fill="none" stroke="#777" stroke-width="0.5" stroke-linecap="round"/><ellipse cx="175.6" cy="509.2" rx="2.9" ry="1.6" fill="#7fd58a" stroke="#233" stroke-width="0.5" transform="rotate(8 175.6 509.2)"/><ellipse cx="175.9" cy="509.2" rx="0.5" ry="1.2" fill="#1a3a22"/><ellipse cx="186.5" cy="505.6" rx="2.5" ry="1.6" fill="#7fd58a" stroke="#233" stroke-width="0.5" transform="rotate(-12 186.5 505.6)"/><ellipse cx="186.8" cy="505.6" rx="0.5" ry="1.2" fill="#1a3a22"/><ellipse cx="182.0" cy="512.7" rx="1.4" ry="1.2" fill="#d98080"/><path d="M180.9 515.7 L183.5 515.3" fill="none" stroke="#333" stroke-width="0.6" stroke-linecap="round"/><path d="M162.7 499.8 L166.7 504.3 L169.8 501.8" fill="none" stroke="#777" stroke-width="0.5" stroke-linecap="round"/><path d="M187.0 494.2 L191.6 495.2" fill="none" stroke="#999" stroke-width="0.4" stroke-linecap="round"/><ellipse cx="139.6" cy="535.7" rx="1.5" ry="1.6" fill="#eaa4aa" stroke="#4a3030" stroke-width="0.5"/><ellipse cx="140.8" cy="540.0" rx="1.5" ry="1.6" fill="#eaa4aa" stroke="#4a3030" stroke-width="0.5"/><ellipse cx="144.3" cy="531.8" rx="1.5" ry="1.6" fill="#eaa4aa" stroke="#4a3030" stroke-width="0.5"/><ellipse cx="221.0" cy="508.7" rx="1.5" ry="1.6" fill="#eaa4aa" stroke="#4a3030" stroke-width="0.5"/><ellipse cx="225.3" cy="511.3" rx="1.5" ry="1.6" fill="#eaa4aa" stroke="#4a3030" stroke-width="0.5"/><ellipse cx="225.7" cy="514.8" rx="1.5" ry="1.6" fill="#eaa4aa" stroke="#4a3030" stroke-width="0.5"/><path d="M183.2 635.7 L183.0 637.7" fill="none" stroke="#000" stroke-width="0.8" stroke-linecap="round"/><path d="M186.2 636.2 L186.0 638.2" fill="none" stroke="#000" stroke-width="0.8" stroke-linecap="round"/><path d="M188.8 636.2 L188.9 637.9" fill="none" stroke="#000" stroke-width="0.8" stroke-linecap="round"/><path d="M219.2 642.8 L219.5 645.6" fill="none" stroke="#000" stroke-width="0.8" stroke-linecap="round"/><path d="M222.2 642.8 L222.5 645.8" fill="none" stroke="#000" stroke-width="0.8" stroke-linecap="round"/><path d="M224.8 542.2 L225.4 537.4 L227.2 532.6 L230.2 528.7 L233.3 526.4" fill="none" stroke="#4166ad" stroke-width="1.6" stroke-linecap="round" stroke-linejoin="round"/><circle cx="210.0" cy="548.7" r="16.4" fill="#15397f"/><path d="M211.1 536.5 L213.7 545.2" fill="none" stroke="#8ea6d6" stroke-width="0.6" stroke-linecap="round"/><path d="M213.7 536.1 L215.9 543.5" fill="none" stroke="#8ea6d6" stroke-width="0.6" stroke-linecap="round"/><path d="M216.3 536.5 L219.8 546.1" fill="none" stroke="#8ea6d6" stroke-width="0.6" stroke-linecap="round"/><path d="M218.5 538.3 L220.8 545.7" fill="none" stroke="#8ea6d6" stroke-width="0.6" stroke-linecap="round"/><path d="M208.5 537.4 L210.2 542.6" fill="none" stroke="#8ea6d6" stroke-width="0.6" stroke-linecap="round"/><path d="M205.9 538.7 L207.2 542.2" fill="none" stroke="#8ea6d6" stroke-width="0.6" stroke-linecap="round"/><path d="M221.5 541.7 L223.3 543.9" fill="none" stroke="#8ea6d6" stroke-width="0.6" stroke-linecap="round"/><path d="M196.3 550.4 L198.9 551.7" fill="none" stroke="#4463a6" stroke-width="0.5" stroke-linecap="round"/><path d="M198.0 546.1 L200.2 547.8" fill="none" stroke="#4463a6" stroke-width="0.5" stroke-linecap="round"/><path d="M202.4 548.7 L206.7 550.4" fill="none" stroke="#4463a6" stroke-width="0.5" stroke-linecap="round"/><path d="M206.7 560.9 L213.7 560.4" fill="none" stroke="#4463a6" stroke-width="0.5" stroke-linecap="round"/><path d="M213.7 555.7 L219.8 554.8" fill="none" stroke="#4463a6" stroke-width="0.5" stroke-linecap="round"/><path d="M198.9 556.5 L202.4 559.1" fill="none" stroke="#4463a6" stroke-width="0.5" stroke-linecap="round"/><path d="M218.9 549.6 L221.5 552.2" fill="none" stroke="#4463a6" stroke-width="0.5" stroke-linecap="round"/></svg>

<div class="abs" style="left:277px;top:467px;width:394px;height:230px;background:#222"></div>
<div class="abs" style="left:282px;top:562px;width:264px;height:15px;background:#000"></div>
<div class="abs" style="left:282px;top:473px;width:1px;height:14px;background:#ddd;z-index:6"></div>
<div class="con" style="top:472px;color:#e474f6">ProjT Launcher version: 0.0.3</div>
<div class="con" style="top:502px;color:#ffb0a6">[ERROR] A spooky error!</div>
<div class="con" style="top:517px;color:#ffffff">[INFO] A harmless message...</div>
<div class="con" style="top:532px;color:#fff4d8">[WARN] A not so spooky warning.</div>
<div class="con" style="top:547px;color:#3be03b">[DEBUG] A secret debugging message...</div>
<div class="con" style="top:562px;color:#ffb0a6;-webkit-text-stroke-color:#000">[FATAL] A terrifying fatal error!</div>

<div class="btn" style="left:431px;top:717px;width:80px"></div>
<div class="btn" style="left:517px;top:717px;width:80px"></div>
<div class="btn" style="left:603px;top:717px;width:80px"></div>
<div class="tx" style="left:463.60px;top:722px;letter-spacing:-0.400px;color:#fff;font-size:12px;line-height:16px;transform:scaleX(0.8976);transform-origin:0 0;"><u>O</u>K</div>
<div class="tx" style="left:539.30px;top:722px;letter-spacing:-0.138px;color:#fff;font-size:12px;line-height:16px;"><u>C</u>ancel</div>
<div class="tx" style="left:630.60px;top:722px;letter-spacing:-0.302px;color:#fff;font-size:12px;line-height:16px;">Help</div>
<div class="fr" style="left:0;top:0;width:690px;height:1px;background:#2b5585"></div><div class="fr" style="left:0;top:0;width:1px;height:748px;background:linear-gradient(#2b5585 0,#2b5585 32px,#2a3540 60px,#252c33 640px,#25688a 700px,#25688a 100%)"></div><div class="fr" style="left:689px;top:0;width:1px;height:748px;background:linear-gradient(#2b5585 0,#2b5585 50px,#555 52px,#555 70px,#333638 72px,#333638 100%)"></div><div class="fr" style="left:0;top:747px;width:690px;height:1px;background:#25688a"></div>
</body></html>
